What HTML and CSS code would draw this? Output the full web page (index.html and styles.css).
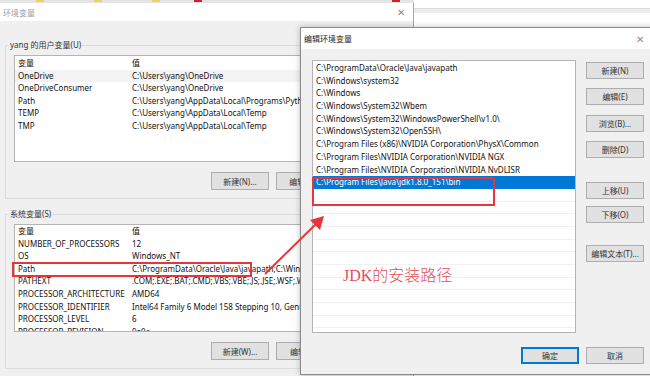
FILE: index.html
```html
<!DOCTYPE html>
<html lang="zh-CN">
<head>
    <meta charset="UTF-8">
    <meta name="viewport" content="width=device-width, initial-scale=1.0">
    <title>编辑环境变量</title>
    <link rel="stylesheet" href="styles.css">
</head>
<body>
    <div class="desktop">
        <div class="top-strip">
            <span class="dot yellow" style="left: 36px"></span>
            <span class="dot yellow" style="left: 94px"></span>
            <span class="dot yellow" style="left: 152px"></span>
            <span class="dot red" style="left: 194px"></span>
            <span class="dot red" style="left: 392px"></span>
        </div>

        <!-- window behind, right side -->
        <div class="win-far">
            <div class="far-band"></div>
        </div>

        <!-- 环境变量 -->
        <div class="win-back">
            <div class="titlebar back-title">
                <span>环境变量</span>
                <span class="close">✕</span>
            </div>
            <div class="back-body">
                <fieldset class="group">
                    <legend>yang 的用户变量(U)</legend>
                    <div class="var-list user-list">
                        <div class="var-row"><span class="c1">变量</span><span class="c2">值</span></div>
                        <div class="var-row hover"><span class="c1">OneDrive</span><span class="c2">C:\Users\yang\OneDrive</span></div>
                        <div class="var-row"><span class="c1">OneDriveConsumer</span><span class="c2">C:\Users\yang\OneDrive</span></div>
                        <div class="var-row"><span class="c1">Path</span><span class="c2">C:\Users\yang\AppData\Local\Programs\Python\Python37\Scripts\</span></div>
                        <div class="var-row"><span class="c1">TEMP</span><span class="c2">C:\Users\yang\AppData\Local\Temp</span></div>
                        <div class="var-row"><span class="c1">TMP</span><span class="c2">C:\Users\yang\AppData\Local\Temp</span></div>
                    </div>
                    <div class="btn-row">
                        <button class="btn">新建(N)...</button>
                        <button class="btn">编辑(E)...</button>
                        <button class="btn">删除(D)</button>
                    </div>
                </fieldset>

                <fieldset class="group sys-group">
                    <legend>系统变量(S)</legend>
                    <div class="var-list sys-list">
                        <div class="var-row"><span class="c1">变量</span><span class="c2">值</span></div>
                        <div class="var-row"><span class="c1">NUMBER_OF_PROCESSORS</span><span class="c2">12</span></div>
                        <div class="var-row"><span class="c1">OS</span><span class="c2">Windows_NT</span></div>
                        <div class="var-row"><span class="c1">Path</span><span class="c2">C:\ProgramData\Oracle\Java\javapath;C:\Windows\system32;C:\Windows</span></div>
                        <div class="var-row"><span class="c1">PATHEXT</span><span class="c2">.COM;.EXE;.BAT;.CMD;.VBS;.VBE;.JS;.JSE;.WSF;.WSH;.MSC</span></div>
                        <div class="var-row"><span class="c1">PROCESSOR_ARCHITECTURE</span><span class="c2">AMD64</span></div>
                        <div class="var-row"><span class="c1">PROCESSOR_IDENTIFIER</span><span class="c2">Intel64 Family 6 Model 158 Stepping 10, GenuineIntel</span></div>
                        <div class="var-row"><span class="c1">PROCESSOR_LEVEL</span><span class="c2">6</span></div>
                        <div class="var-row"><span class="c1">PROCESSOR_REVISION</span><span class="c2">9e0a</span></div>
                    </div>
                    <div class="btn-row">
                        <button class="btn">新建(W)...</button>
                        <button class="btn">编辑(I)...</button>
                        <button class="btn">删除(L)</button>
                    </div>
                </fieldset>
            </div>
        </div>

        <!-- 编辑环境变量 -->
        <div class="win-front">
            <div class="titlebar front-title">
                <span>编辑环境变量</span>
                <span class="close">✕</span>
            </div>
            <div class="front-body">
                <div class="front-main">
                    <div class="path-list">
                        <div class="path-row">C:\ProgramData\Oracle\Java\javapath</div>
                        <div class="path-row">C:\Windows\system32</div>
                        <div class="path-row">C:\Windows</div>
                        <div class="path-row">C:\Windows\System32\Wbem</div>
                        <div class="path-row">C:\Windows\System32\WindowsPowerShell\v1.0\</div>
                        <div class="path-row">C:\Windows\System32\OpenSSH\</div>
                        <div class="path-row">C:\Program Files (x86)\NVIDIA Corporation\PhysX\Common</div>
                        <div class="path-row">C:\Program Files\NVIDIA Corporation\NVIDIA NGX</div>
                        <div class="path-row">C:\Program Files\NVIDIA Corporation\NVIDIA NvDLISR</div>
                        <div class="path-row selected">C:\Program Files\Java\jdk1.8.0_151\bin</div>
                        <div class="path-row empty"></div>
                        <div class="path-row empty"></div>
                        <div class="path-row empty"></div>
                        <div class="path-row empty"></div>
                        <div class="path-row empty"></div>
                        <div class="path-row empty"></div>
                        <div class="path-row empty"></div>
                        <div class="path-row empty"></div>
                        <div class="path-row empty"></div>
                        <div class="path-row empty"></div>
                        <div class="path-row empty"></div>
                    </div>
                    <div class="side-btns">
                        <button class="btn">新建(N)</button>
                        <button class="btn">编辑(E)</button>
                        <button class="btn">浏览(B)...</button>
                        <button class="btn">删除(D)</button>
                        <button class="btn move-up">上移(U)</button>
                        <button class="btn move-down">下移(O)</button>
                        <button class="btn edit-text">编辑文本(T)...</button>
                    </div>
                </div>
                <div class="front-footer">
                    <button class="btn default">确定</button>
                    <button class="btn">取消</button>
                </div>
            </div>
        </div>

        <!-- annotations -->
        <div class="mark mark-path"></div>
        <div class="mark mark-jdk"></div>
        <div class="note">JDK的安装路径</div>
        <svg class="arrow" width="650" height="376" viewBox="0 0 650 376">
            <line x1="265" y1="274" x2="316" y2="224" stroke="#e8353c" stroke-width="2"/>
            <polygon points="324,216 320,230 310,220" fill="#e8353c"/>
        </svg>
    </div>
</body>
</html>
```

FILE: styles.css
```css
* {
    box-sizing: border-box;
}

body {
    margin: 0;
    font-family: "Noto Sans", "Noto Sans CJK SC", sans-serif;
    font-size: 8px;
    color: #111;
    background-color: #ffffff;
}

.desktop {
    position: relative;
    width: 650px;
    height: 376px;
    overflow: hidden;
    background-color: #ffffff;
}

.top-strip {
    position: absolute;
    left: 0;
    top: 0;
    width: 650px;
    height: 3px;
    background-color: #e4e4e4;
}

.dot {
    position: absolute;
    top: 0;
    width: 8px;
    height: 2px;
}

.dot.yellow {
    background-color: #f0d060;
}

.dot.red {
    background-color: #d0202a;
}

.win-far {
    position: absolute;
    left: 414px;
    top: 0;
    width: 236px;
    height: 28px;
    background-color: #ffffff;
    border-bottom: 1px solid #c8c8c8;
}

.far-band {
    margin-top: 8px;
    height: 5px;
    background-color: #ececec;
    border-top: 1px solid #dcdcdc;
}

/* back window */

.win-back {
    position: absolute;
    left: 0;
    top: 3px;
    width: 414px;
    height: 373px;
    background-color: #f0f0f0;
    border-right: 1px solid #a8a8a8;
}

.titlebar {
    display: flex;
    justify-content: space-between;
    align-items: center;
    background-color: #ffffff;
}

.back-title {
    height: 18px;
    padding: 0 8px 0 3px;
    font-size: 8px;
    color: #a0a0a0;
}

.close {
    font-size: 10px;
    color: #8a8a8a;
}

.back-body {
    padding: 18px 0 0 5px;
}

.group {
    width: 403px;
    min-width: 0;
    margin: 0;
    padding: 0 8px 8px 8px;
    border: 1px solid #dcdcdc;
}

.group legend {
    margin-left: -5px;
    padding: 0 1px;
    height: 12px;
    line-height: 12px;
    color: #333;
}

.sys-group {
    margin-top: 9px;
}

.var-list {
    margin-top: 4px;
    background-color: #ffffff;
    border: 1px solid #b4b4b4;
    overflow: hidden;
}

.user-list {
    height: 107px;
    padding-top: 1px;
}

.sys-list {
    height: 108px;
}

.var-row {
    display: flex;
    height: 12.6px;
    line-height: 12.6px;
    white-space: nowrap;
}

.var-row.hover {
    background-color: #f3f3f3;
}

.c1 {
    width: 117px;
    flex-shrink: 0;
    padding-left: 3px;
}

.c2 {
    flex: 1;
    overflow: hidden;
}

.btn-row {
    display: flex;
    justify-content: flex-end;
    gap: 7px;
    margin-top: 10px;
}

.btn {
    width: 58px;
    height: 18px;
    padding: 0;
    font-family: "Noto Sans", "Noto Sans CJK SC", sans-serif;
    font-size: 8px;
    color: #333;
    background-color: #e1e1e1;
    border: 1px solid #adadad;
}

/* front dialog */

.win-front {
    position: absolute;
    left: 300px;
    top: 27px;
    width: 360px;
    height: 348px;
    background-color: #f0f0f0;
    border: 1px solid #8a8a8a;
    box-shadow: 0 0 6px rgba(0, 0, 0, 0.25);
}

.front-title {
    height: 21px;
    padding: 0 15px 0 3px;
    font-size: 8px;
    color: #222;
}

.front-body {
    padding: 11px 0 0 11px;
}

.front-main {
    display: flex;
}

.path-list {
    width: 264px;
    height: 273px;
    padding-top: 1px;
    background-color: #ffffff;
    border: 1px solid #b4b4b4;
    overflow: hidden;
}

.path-row {
    height: 12.7px;
    line-height: 12.7px;
    padding-left: 3px;
    white-space: nowrap;
}

.path-row.selected {
    background-color: #0078d7;
    color: #ffffff;
}

.path-row.empty {
    border-bottom: 1px solid #f1f1f1;
}

.side-btns {
    display: flex;
    flex-direction: column;
    margin-left: 10px;
    padding-top: 2px;
}

.side-btns .btn {
    height: 17px;
    margin-bottom: 9.3px;
}

.side-btns .move-up {
    margin-top: 14.4px;
    margin-bottom: 7.3px;
}

.side-btns .edit-text {
    margin-top: 12.7px;
}

.front-footer {
    display: flex;
    gap: 7px;
    margin-top: 14px;
    padding-left: 209px;
}

.front-footer .btn {
    height: 17px;
}

.btn.default {
    border: 1px solid #0078d7;
    box-shadow: inset 0 0 0 1px #0078d7;
}

/* annotations */

.mark {
    position: absolute;
    border: 2px solid #e8353c;
}

.mark-path {
    left: 12px;
    top: 262px;
    width: 240px;
    height: 15px;
}

.mark-jdk {
    left: 312px;
    top: 177px;
    width: 183px;
    height: 29px;
}

.note {
    position: absolute;
    left: 343px;
    top: 262px;
    font-family: "Liberation Serif", "Noto Sans CJK SC", serif;
    font-size: 16px;
    font-weight: 300;
    color: #e0505a;
}

.arrow {
    position: absolute;
    left: 0;
    top: 0;
    pointer-events: none;
}
```
